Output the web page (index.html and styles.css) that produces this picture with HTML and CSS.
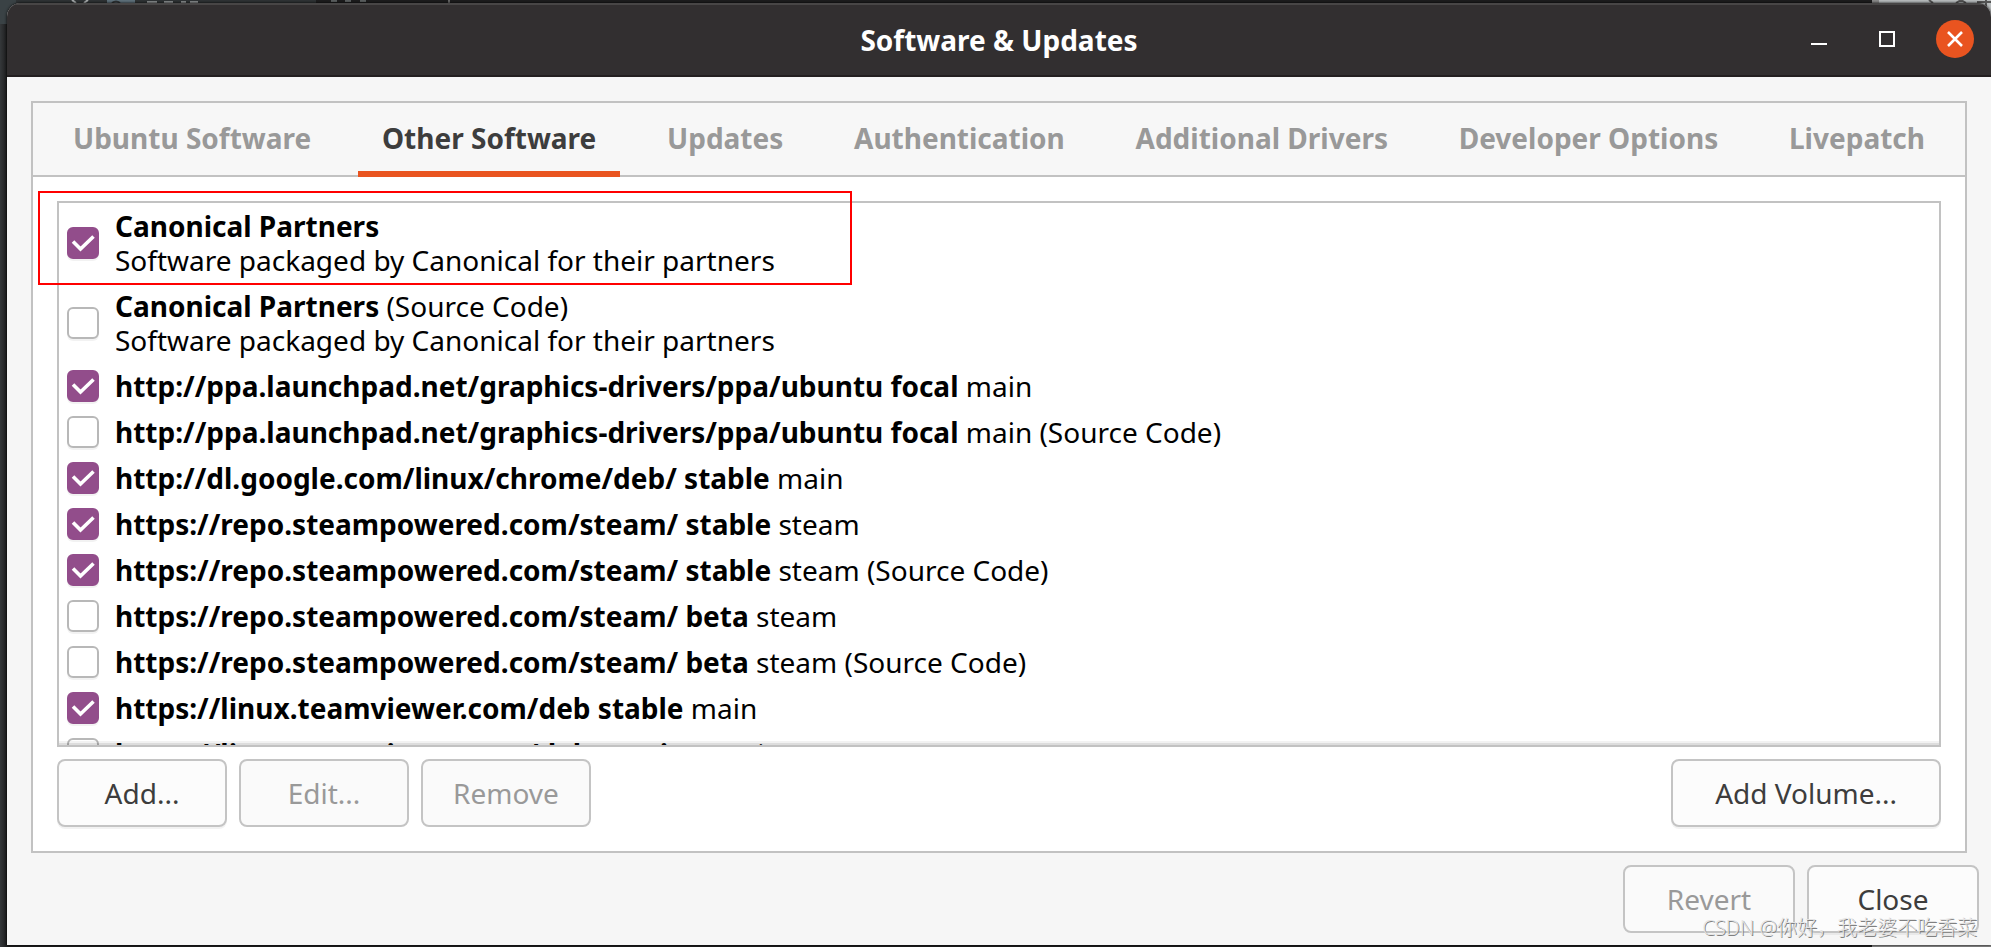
FILE: index.html
```html
<!DOCTYPE html>
<html lang="en">
<head>
<meta charset="utf-8">
<title>Software &amp; Updates</title>
<link rel="stylesheet" href="styles.css">
</head>
<body>
<div class="desktop">
  <svg class="backdrop backdrop-left" width="500" height="24" aria-hidden="true">
    <rect width="16" height="24" fill="#3a4245"/>
    <rect x="16" width="300" height="3" fill="#2f3335"/>
    <path d="M72 0l4 3M88 0l-4 3" stroke="#a9adae" stroke-width="2"/>
    <rect x="107" width="28" height="3" fill="#5f727c"/>
    <path d="M112 3q4-3 8 0" stroke="#2f3335" stroke-width="2" fill="none"/>
    <path d="M147 2h10M164 2h9M181 2h5M190 2h8" stroke="#8b8f90" stroke-width="2"/>
    <path d="M331 1h6M345 1h6M360 1h6" stroke="#5b5f60" stroke-width="2"/>
    <path d="M449 0v3" stroke="#666" stroke-width="2"/>
  </svg>
  <svg class="backdrop backdrop-right" width="112" height="24" aria-hidden="true">
    <rect width="112" height="24" fill="#b9bdbe"/>
    <path d="M50 0l4 3M77 3l5-3 5 3M98 2h14M107 0v10" stroke="#555" stroke-width="2" fill="none"/>
  </svg>
  <main class="window">
    <header class="titlebar">
      <h1 class="title">Software &amp; Updates</h1>
      <div class="window-controls">
        <button class="control" type="button" aria-label="Minimize"><svg width="16" height="16" viewBox="0 0 16 16"><path d="M0 13h16" stroke="#fff" stroke-width="2"/></svg></button>
        <button class="control" type="button" aria-label="Maximize"><svg width="16" height="16" viewBox="0 0 16 16"><rect x="1" y="1" width="14" height="14" fill="none" stroke="#fff" stroke-width="2"/></svg></button>
        <button class="control control-close" type="button" aria-label="Close window"><svg width="16" height="16" viewBox="0 0 16 16"><path d="M1 1l14 14M15 1L1 15" stroke="#fff" stroke-width="2.6"/></svg></button>
      </div>
    </header>
    <div class="content">
      <section class="notebook">
        <div class="tabs" role="tablist">
          <button class="tab" type="button" role="tab">Ubuntu Software</button>
          <button class="tab tab-active" type="button" role="tab" aria-selected="true">Other Software</button>
          <button class="tab" type="button" role="tab">Updates</button>
          <button class="tab" type="button" role="tab">Authentication</button>
          <button class="tab" type="button" role="tab">Additional Drivers</button>
          <button class="tab" type="button" role="tab">Developer Options</button>
          <button class="tab" type="button" role="tab">Livepatch</button>
        </div>
        <div class="page">
          <div class="source-frame">
            <div class="sources">
              <label class="source source-tall"><input class="check" type="checkbox" checked><span class="source-text"><b>Canonical Partners</b><br>Software packaged by Canonical for their partners</span></label>
              <label class="source source-tall"><input class="check" type="checkbox"><span class="source-text"><b>Canonical Partners</b> (Source Code)<br>Software packaged by Canonical for their partners</span></label>
              <label class="source"><input class="check" type="checkbox" checked><span class="source-text"><b>http://ppa.launchpad.net/graphics-drivers/ppa/ubuntu focal</b> main</span></label>
              <label class="source"><input class="check" type="checkbox"><span class="source-text"><b>http://ppa.launchpad.net/graphics-drivers/ppa/ubuntu focal</b> main (Source Code)</span></label>
              <label class="source"><input class="check" type="checkbox" checked><span class="source-text"><b>http://dl.google.com/linux/chrome/deb/ stable</b> main</span></label>
              <label class="source"><input class="check" type="checkbox" checked><span class="source-text"><b>https://repo.steampowered.com/steam/ stable</b> steam</span></label>
              <label class="source"><input class="check" type="checkbox" checked><span class="source-text"><b>https://repo.steampowered.com/steam/ stable</b> steam (Source Code)</span></label>
              <label class="source"><input class="check" type="checkbox"><span class="source-text"><b>https://repo.steampowered.com/steam/ beta</b> steam</span></label>
              <label class="source"><input class="check" type="checkbox"><span class="source-text"><b>https://repo.steampowered.com/steam/ beta</b> steam (Source Code)</span></label>
              <label class="source"><input class="check" type="checkbox" checked><span class="source-text"><b>https://linux.teamviewer.com/deb stable</b> main</span></label>
              <label class="source"><input class="check" type="checkbox"><span class="source-text"><b>https://linux.teamviewer.com/deb preview</b> main</span></label>
            </div>
            <div class="highlight" aria-hidden="true"></div>
          </div>
          <div class="actions">
            <button class="button" type="button">Add...</button>
            <button class="button" type="button" disabled>Edit...</button>
            <button class="button" type="button" disabled>Remove</button>
            <button class="button button-end" type="button">Add Volume...</button>
          </div>
        </div>
      </section>
      <footer class="footer">
        <button class="button" type="button" disabled>Revert</button>
        <button class="button" type="button">Close</button>
      </footer>
    </div>
  </main>
  <div class="watermark">CSDN @你好，我老婆不吃香菜</div>
</div>
</body>
</html>
```
FILE: styles.css
```css
* { box-sizing: border-box; }

body {
  margin: 0;
  font-family: "Noto Sans", "Noto Sans CJK SC", sans-serif;
  font-size: 28px;
  line-height: 34px;
  color: #000;
}

button {
  font: inherit;
  margin: 0;
}

.desktop {
  position: relative;
  display: flex;
  flex-direction: column;
  height: 100vh;
  padding: 3px 0 2px 7px;
  overflow: hidden;
  background: linear-gradient(90deg, #35383a 0, #1d1d1e 7px, #1d1d1e 94%, #8a8a8a 94%);
}

.backdrop {
  position: absolute;
  top: 0;
}

.backdrop-left { left: 0; }

.backdrop-right { right: 0; }

.window {
  position: relative;
  display: flex;
  flex: 1;
  flex-direction: column;
  min-height: 0;
  overflow: hidden;
  border-radius: 14px 14px 0 0;
  background: #f6f6f6;
  box-shadow: 0 0 3px #000;
}

.titlebar {
  display: grid;
  grid-template-columns: 1fr auto 1fr;
  align-items: center;
  height: 74px;
  border-top: 2px solid #484646;
  border-bottom: 2px solid #231f20;
  background: #322f30;
}

.title {
  grid-column: 2;
  margin: 0;
  font-size: 28px;
  font-weight: 700;
  color: #fff;
}

.window-controls {
  display: flex;
  justify-content: flex-end;
  gap: 30px;
  padding: 0 17px 2px 0;
}

.control {
  display: grid;
  place-items: center;
  width: 38px;
  height: 38px;
  padding: 0;
  border: 0;
  border-radius: 50%;
  background: none;
}

.control-close { background: #e95420; }

.content {
  display: flex;
  flex: 1;
  flex-direction: column;
  min-height: 0;
  padding: 24px 12px 12px 24px;
}

.notebook {
  display: flex;
  flex: 1;
  flex-direction: column;
  min-height: 0;
  margin-right: 12px;
  border: 2px solid #c2c2c2;
  background: #fff;
}

.tabs {
  display: flex;
  justify-content: space-between;
  height: 74px;
  padding: 0 16px;
  border-bottom: 2px solid #c2c2c2;
  background: #f7f7f7;
}

.tab {
  height: 74px;
  padding: 2px 24px 0;
  border: 0;
  border-bottom: 6px solid transparent;
  background: none;
  font-weight: 700;
  color: #999;
}

.tab-active {
  border-bottom-color: #e95420;
  color: #3d3d3d;
}

.page {
  display: flex;
  flex: 1;
  flex-direction: column;
  gap: 12px;
  min-height: 0;
  padding: 24px;
}

.source-frame {
  position: relative;
  display: flex;
  flex: 1;
  min-height: 0;
}

.sources {
  flex: 1;
  overflow: hidden;
  border: 2px solid #c2c2c2;
}

.source-frame::after {
  content: "";
  position: absolute;
  right: 2px;
  bottom: 2px;
  left: 2px;
  height: 4px;
  background: linear-gradient(#0000000d 50%, #00000022 50%);
}

.source {
  display: flex;
  align-items: center;
  gap: 16px;
  height: 46px;
  padding-left: 8px;
  white-space: nowrap;
}

.source-tall { height: 80px; }

.source b { font-weight: 700; }

.check {
  appearance: none;
  flex: none;
  width: 32px;
  height: 32px;
  margin: 0;
  border: 2px solid #b8b8b8;
  border-radius: 6px;
  background: #fff;
  box-shadow: 0 2px 0 #0000000d;
}

.check:checked {
  border-color: #924d8b;
  background: #924d8b url("data:image/svg+xml,%3Csvg xmlns='http://www.w3.org/2000/svg' viewBox='0 0 28 28'%3E%3Cpath d='M4 12.5l7.5 7.5L24.500 7.500' fill='none' stroke='white' stroke-width='3.6'/%3E%3C/svg%3E") center / 28px 28px no-repeat;
}

.highlight {
  position: absolute;
  top: -10px;
  left: -19px;
  width: 814px;
  height: 94px;
  border: 2px solid #f00;
}

.actions {
  display: flex;
  gap: 12px;
}

.button {
  min-width: 170px;
  height: 68px;
  padding: 0 28px;
  border: 2px solid #c4c4c4;
  border-radius: 8px;
  background: #fcfcfc;
  box-shadow: 0 2px 0 #0000000d;
  color: #3d3d3d;
}

.button:disabled {
  background: #fafafa;
  box-shadow: none;
  color: #999;
}

.button-end {
  margin-left: auto;
  padding: 0 42px;
}

.footer {
  display: flex;
  justify-content: flex-end;
  gap: 12px;
  padding-top: 12px;
}

.footer .button { min-width: 172px; }

.watermark {
  position: absolute;
  right: 14px;
  bottom: 6px;
  font-family: "Open Sans", "Noto Sans CJK SC", sans-serif;
  font-size: 20px;
  font-weight: 300;
  line-height: 26px;
  color: #e4e4e4;
  text-shadow: 1px 1px 0 #808080;
}
```
